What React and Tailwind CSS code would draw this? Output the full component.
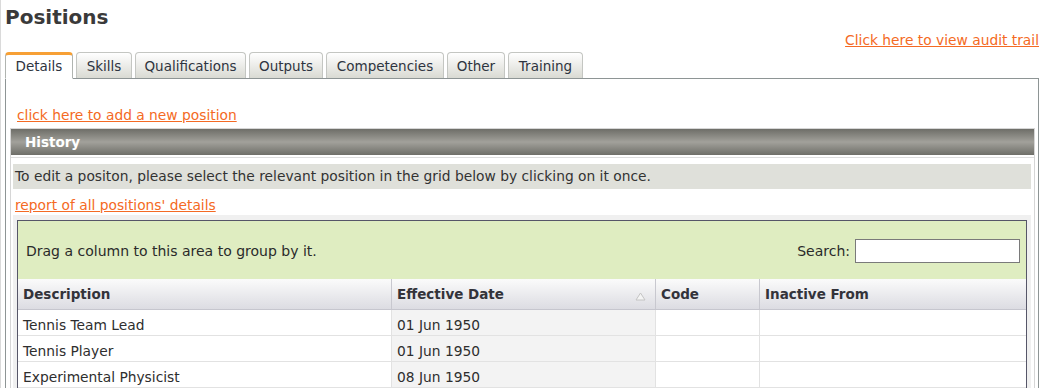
import { useState } from 'react'

const tabs = [
  { label: 'Details', w: 'w-[68px]' },
  { label: 'Skills', w: 'w-[56px]' },
  { label: 'Qualifications', w: 'w-[111px]' },
  { label: 'Outputs', w: 'w-[74px]' },
  { label: 'Competencies', w: 'w-[118px]' },
  { label: 'Other', w: 'w-[58px]' },
  { label: 'Training', w: 'w-[75px]' },
]

const rows = [
  { description: 'Tennis Team Lead', date: '01 Jun 1950' },
  { description: 'Tennis Player', date: '01 Jun 1950' },
  { description: 'Experimental Physicist', date: '08 Jun 1950' },
]

function Tabs({ active, onSelect }) {
  return (
    <div className="flex items-end gap-[3px] pl-[4px] h-[27px]">
      {tabs.map(t => {
        const isActive = t.label === active
        return (
          <button
            key={t.label}
            onClick={() => onSelect(t.label)}
            className={
              isActive
                ? `${t.w} relative z-10 -mb-px h-[27px] border border-[#b0b4b0] border-t-[3px] border-t-[#f7a035] border-b-white bg-white rounded-t-[4px] text-[13.5px] text-[#2e3440] leading-[21px]`
                : `${t.w} h-[26px] border border-[#c4c6c2] border-b-0 rounded-t-[4px] bg-gradient-to-b from-white to-[#d9dad3] text-[13.5px] text-[#2e3440] leading-[24px]`
            }
          >
            {t.label}
          </button>
        )
      })}
    </div>
  )
}

function Grid() {
  return (
    <div className="border border-[#565668] bg-white">
      <div className="h-[58px] bg-[#dfedc1] flex items-center justify-between pl-[8px] pr-[6px] text-[14px] text-[#2a2a2a]">
        <span className="mt-[2px]">Drag a column to this area to group by it.</span>
        <div className="flex items-center gap-[5px] mt-[2px]">
          <span>Search:</span>
          <input className="w-[165px] h-[24px] border border-[#7a7a7a] bg-white outline-none" />
        </div>
      </div>

      <div className="flex h-[31px] bg-gradient-to-b from-[#fbfbfb] to-[#dcdce2] border-b border-[#c6c6ce] text-[13.5px] font-bold text-[#33333a] leading-[30px]">
        <div className="w-[374px] pl-[5px] border-r border-[#c8c8cf]">Description</div>
        <div className="w-[264px] pl-[5px] border-r border-[#c8c8cf] flex justify-between pr-[9px]">
          <span>Effective Date</span>
          <svg width="11" height="9" viewBox="0 0 11 9" className="mt-[13px]">
            <path d="M5.5 1 L10 8 L1 8 Z" fill="#f4f4f4" stroke="#c4c4c4" />
          </svg>
        </div>
        <div className="w-[104px] pl-[5px] border-r border-[#c8c8cf]">Code</div>
        <div className="flex-1 pl-[5px]">Inactive From</div>
      </div>

      {rows.map((r, i) => (
        <div key={i} className="flex h-[26px] border-b border-[#e2e2e2] text-[13.8px] text-[#2e2e2e] leading-[31px]">
          <div className="w-[374px] pl-[5px] border-r border-[#e2e2e2] overflow-hidden">{r.description}</div>
          <div className="w-[264px] pl-[5px] border-r border-[#e2e2e2] bg-[#f3f3f3] overflow-hidden">{r.date}</div>
          <div className="w-[104px] border-r border-[#e2e2e2]"></div>
          <div className="flex-1"></div>
        </div>
      ))}
    </div>
  )
}

export default function App() {
  const [active, setActive] = useState('Details')

  return (
    <div className="min-h-screen bg-white border-l border-[#dadada] font-['DejaVu_Sans',sans-serif] overflow-hidden">
      <div className="h-[30px] pl-[4px] pt-[5px] text-[20px] leading-[24px] font-bold text-[#3a3a3a]">Positions</div>

      <div className="h-[21px] flex justify-end pr-[4px]">
        <a href="#" className="text-[13.8px] leading-[21px] text-[#f46a24] underline">Click here to view audit trail</a>
      </div>

      <Tabs active={active} onSelect={setActive} />

      <div className="ml-[4px] mr-[4px] border border-[#8e9595] h-[320px] pl-[4px] pr-[3px]">
        <div className="pt-[24px] pl-[7px] h-[49px]">
          <a href="#" className="text-[13.8px] leading-[20px] text-[#f46a24] underline">click here to add a new position</a>
        </div>

        <div className="border border-[#d6d6d6]">
          <div className="h-[26px] bg-gradient-to-b from-[#6e6e68] via-[#a2a19b] to-[#6f6f69] text-white font-bold text-[13.5px] leading-[26px] pl-[14px]">
            History
          </div>
          <div className="mt-[2px] border-t border-[#dedede] pl-[2px] pr-[3px] pt-[6px]">
            <div className="h-[25px] bg-[#dfe0da] pl-[2px] text-[13.8px] leading-[25px] text-[#333]">
              To edit a positon, please select the relevant position in the grid below by clicking on it once.
            </div>
            <div className="h-[26px] pt-[4px]">
              <a href="#" className="pl-[2px] text-[13.8px] leading-[20px] text-[#f46a24] underline">report of all positions' details</a>
            </div>
            <div className="bg-[#f0f0f0] pt-[5px] pl-[4px] pr-[4px]">
              <Grid />
            </div>
          </div>
        </div>
      </div>
    </div>
  )
}
